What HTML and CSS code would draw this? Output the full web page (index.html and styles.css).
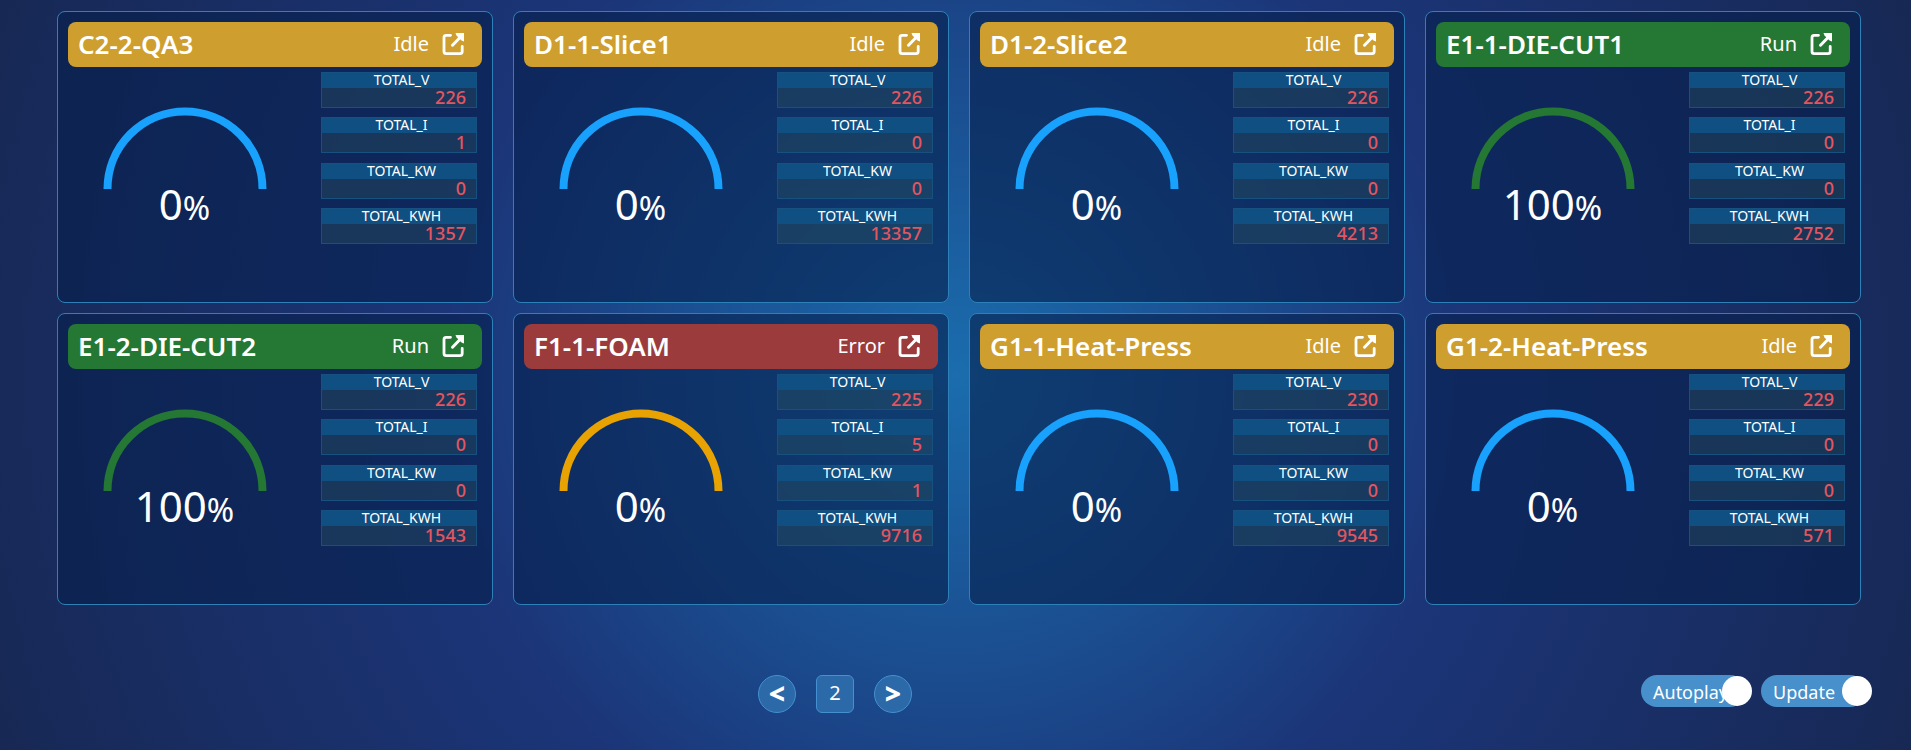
FILE: index.html
```
<!DOCTYPE html>
<html lang="en">
<head>
<meta charset="utf-8">
<title>Machine status</title>
<link rel="stylesheet" href="styles.css">
</head>
<body>
<svg class="defs" aria-hidden="true">
  <symbol id="open" viewBox="0 0 24 24">
    <path d="M9.500 3.300H5.200Q3 3.300 3 5.500V19.500Q3 21.700 5.200 21.700H19Q21.200 21.700 21.200 19.500V14.500" fill="none" stroke="currentColor" stroke-width="2.800" stroke-linecap="round"/>
    <path d="M11.500 13.200L19 5.500" fill="none" stroke="currentColor" stroke-width="3" stroke-linecap="round"/>
    <path d="M14.500 1H23V9.500L20.500 8.500L15.500 3.500Z" fill="currentColor"/>
  </symbol>
  <symbol id="arc" viewBox="0 0 164 82">
    <path d="M4.500 82A77.500 77.500 0 0 1 159.500 82" fill="none" stroke="currentColor" stroke-width="8"/>
  </symbol>
</svg>
<main class="board" id="board"></main>
<footer class="footer">
  <nav class="pager" aria-label="Pages">
    <button class="pager-btn" type="button" aria-label="Previous page">&lt;</button>
    <span class="pager-page">2</span>
    <button class="pager-btn" type="button" aria-label="Next page">&gt;</button>
  </nav>
  <div class="toggles">
    <label class="toggle"><input class="toggle-input" type="checkbox" checked><span>Autoplay</span></label>
    <label class="toggle"><input class="toggle-input" type="checkbox" checked><span>Update</span></label>
  </div>
</footer>
<script src="app.js"></script>
</body>
</html>
```
FILE: styles.css
```
* { box-sizing: border-box; }

body {
  margin: 0;
  min-height: 100vh;
  display: flex;
  flex-direction: column;
  font-family: "Noto Sans", "Open Sans", sans-serif;
  color: #fff;
  background: radial-gradient(circle at 50% 50%, #1a6dae, #1b3578, #172854);
}

.defs { position: absolute; width: 0; height: 0; }

.board {
  display: grid;
  grid-template-columns: repeat(4, minmax(0, 1fr));
  gap: 10px 20px;
  padding: 11px 50px 0 57px;
}

.card {
  min-height: 292px;
  padding: 10px;
  border: 1px solid #2d80b8;
  border-radius: 8px;
  background: rgba(7, 31, 77, 0.6);
}

.card-head {
  display: flex;
  align-items: center;
  height: 45px;
  padding: 0 17px 2px 10px;
  border-radius: 8px;
}

.card-head.idle { background: #ce9e2f; }
.card-head.run { background: #257734; }
.card-head.error { background: #9b3b3c; }

.card-title { flex: 1; margin: 0; font-size: 26px; font-weight: 600; line-height: 32px; }
.card-status { margin-right: 12px; font-size: 20px; line-height: 26px; }
.card-open { display: flex; color: inherit; }
.icon { width: 24px; height: 24px; }

.card-body {
  display: grid;
  grid-template-columns: minmax(0, 1fr) 156px;
  padding: 5px 5px 0 0;
}

.gauge { display: flex; flex-direction: column; align-items: center; padding: 35px 20px 0 0; }
.gauge-arc { width: 164px; height: 82px; }
.gauge-arc.idle { color: #18a2fd; }
.gauge-arc.run { color: #257734; }
.gauge-arc.error { color: #e8a202; }
.gauge-value { margin-top: -14px; font-size: 42px; line-height: 58px; }
.gauge-unit { font-size: 33px; }

.metrics { display: flex; flex-direction: column; justify-content: space-between; align-self: start; height: 172px; margin: 0; }
.metric { border: 1px solid #17517f; background: rgba(43, 79, 92, 0.4); }
.metric-name { padding: 0 0 2px 5px; background: #104f81; font-size: 14px; line-height: 13px; text-align: center; }
.metric-value { margin: 0; padding-right: 10px; color: #e35561; font-size: 18px; font-weight: 500; line-height: 19px; text-align: right; }

.footer {
  display: grid;
  grid-template-columns: 1fr auto;
  padding: 70px 39px 0 57px;
}

.pager { display: flex; justify-content: center; gap: 20px; padding-right: 28px; }

.pager-btn, .pager-page {
  display: flex;
  align-items: center;
  justify-content: center;
  width: 38px;
  height: 38px;
  padding: 0 0 2px;
  border: 1px solid #4490d2;
  background: #2c69a8;
  color: #fff;
  font-family: inherit;
  font-size: 20px;
  line-height: 24px;
}

.pager-btn { border-radius: 50%; font-size: 28px; font-weight: 900; }
.pager-page { border-radius: 6px; }

.toggles { display: flex; align-items: flex-start; gap: 9px; }
.toggle {
  position: relative;
  width: 111px;
  height: 32px;
  padding-left: 12px;
  font-size: 18px;
  line-height: 34px;
  isolation: isolate;
}
.toggle-input { position: absolute; inset: 0; z-index: -1; width: 105px; height: 32px; margin: 0; border-radius: 16px; background: #4790cb; appearance: none; }
.toggle::after { content: ""; position: absolute; top: 1px; right: 0; width: 30px; height: 30px; border-radius: 50%; background: #fff; }
```
FILE: app.js
```
const machines = [
  ["C2-2-QA3", "Idle", 0, [226, 1, 0, 1357]],
  ["D1-1-Slice1", "Idle", 0, [226, 0, 0, 13357]],
  ["D1-2-Slice2", "Idle", 0, [226, 0, 0, 4213]],
  ["E1-1-DIE-CUT1", "Run", 100, [226, 0, 0, 2752]],
  ["E1-2-DIE-CUT2", "Run", 100, [226, 0, 0, 1543]],
  ["F1-1-FOAM", "Error", 0, [225, 5, 1, 9716]],
  ["G1-1-Heat-Press", "Idle", 0, [230, 0, 0, 9545]],
  ["G1-2-Heat-Press", "Idle", 0, [229, 0, 0, 571]]
];
const names = ["TOTAL_V", "TOTAL_I", "TOTAL_KW", "TOTAL_KWH"];

document.getElementById("board").innerHTML = machines.map(([title, status, load, values]) => {
  const state = status.toLowerCase();
  const metrics = values.map((v, i) => `
    <div class="metric"><dt class="metric-name">${names[i]}</dt><dd class="metric-value">${v}</dd></div>`).join("");
  return `
  <article class="card">
    <header class="card-head ${state}">
      <h2 class="card-title">${title}</h2>
      <span class="card-status">${status}</span>
      <a class="card-open" href="#" aria-label="Open ${title}"><svg class="icon"><use href="#open"/></svg></a>
    </header>
    <div class="card-body">
      <div class="gauge">
        <svg class="gauge-arc ${state}" aria-hidden="true"><use href="#arc"/></svg>
        <div class="gauge-value">${load}<span class="gauge-unit">%</span></div>
      </div>
      <dl class="metrics">${metrics}</dl>
    </div>
  </article>`;
}).join("");
```
